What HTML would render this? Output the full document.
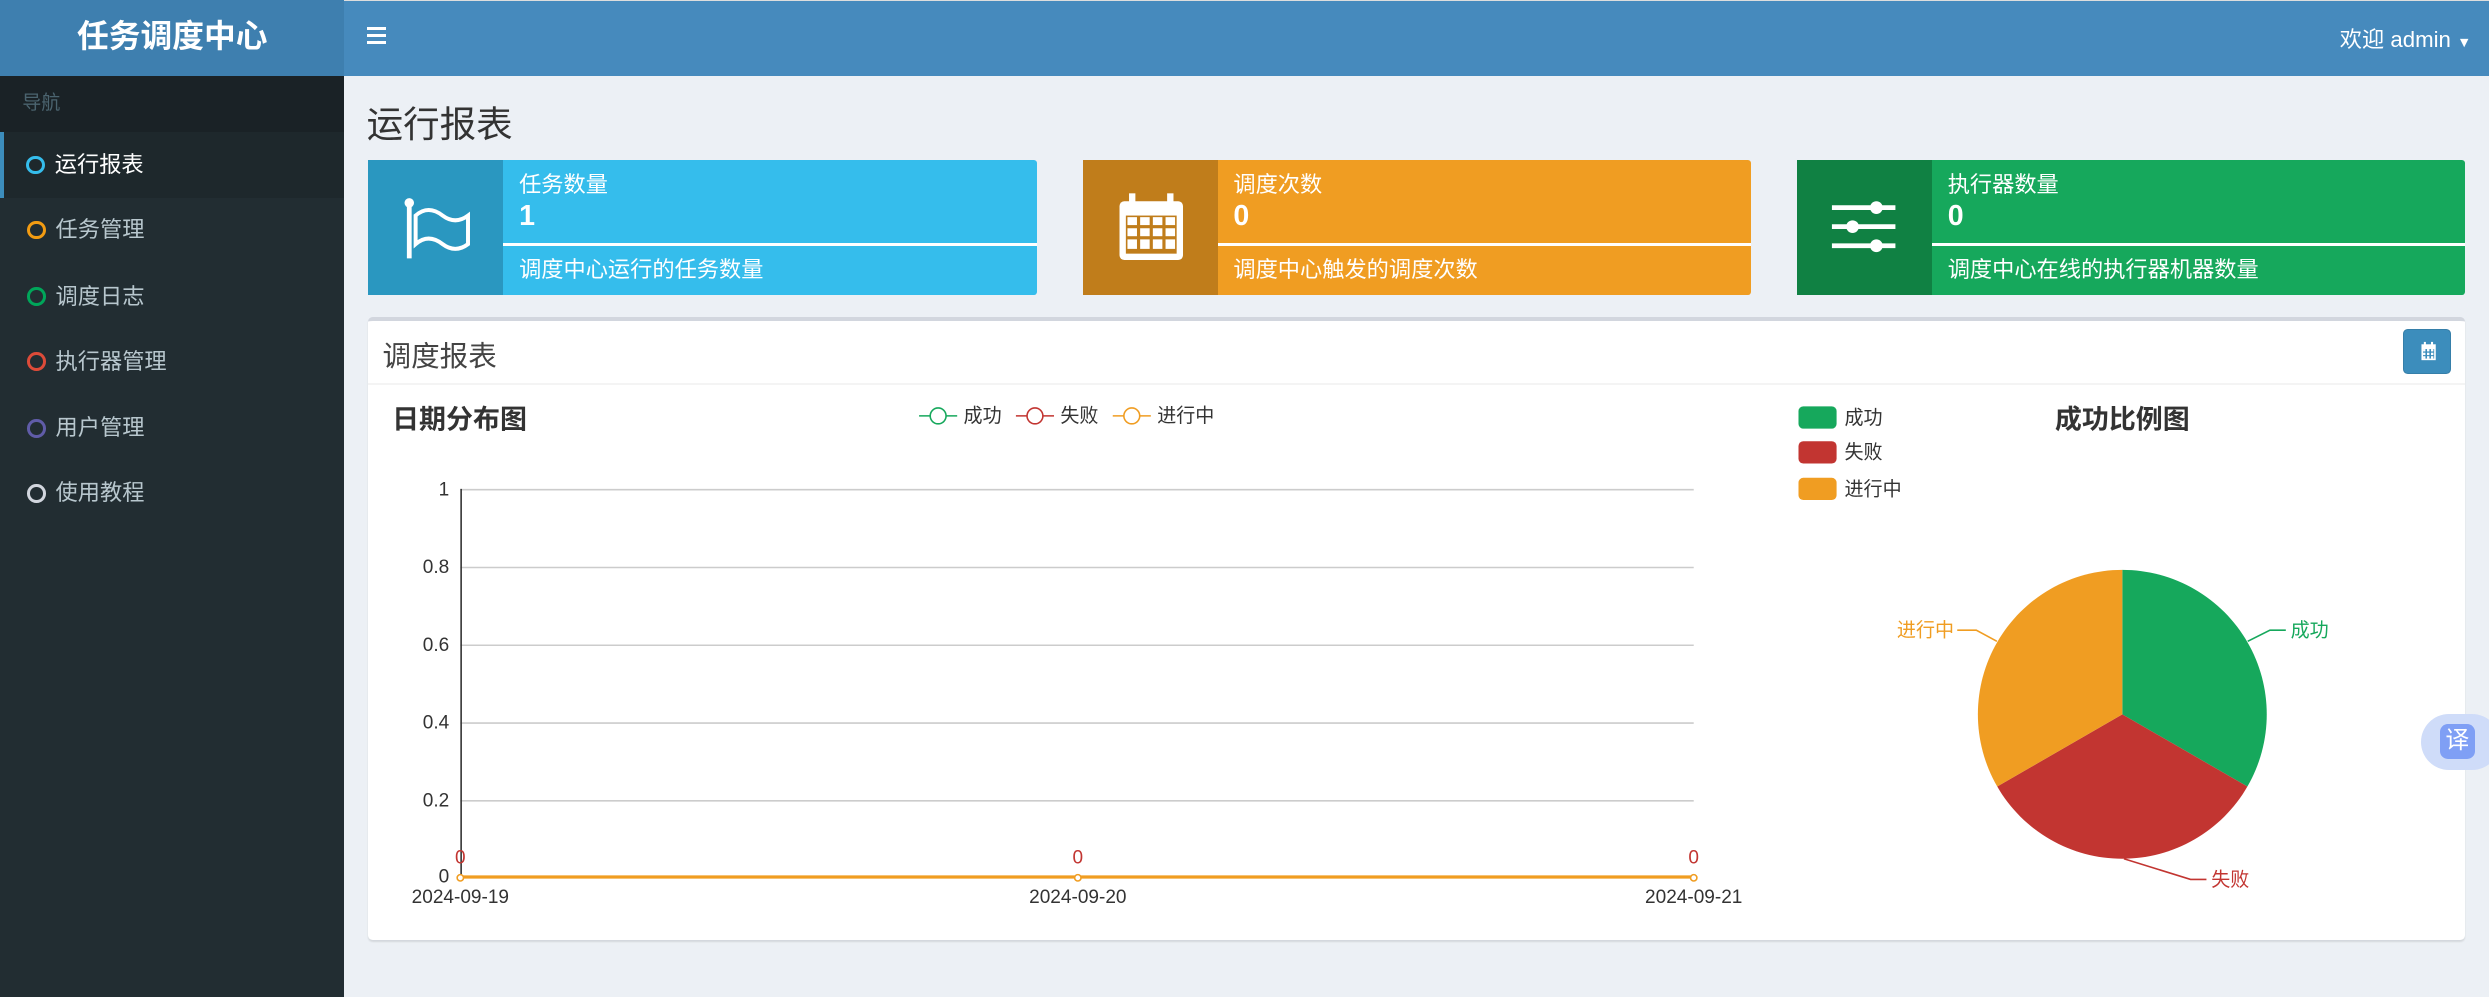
<!DOCTYPE html>
<html><head><meta charset="utf-8"><style>
html,body{margin:0;padding:0;overflow:hidden;}
body{width:2489px;height:997px;background:#ecf0f5;}
#w{zoom:1.58737;width:1568px;height:628px;position:relative;font-family:"Liberation Sans","Noto Sans CJK SC",sans-serif;color:#333;}
.abs{position:absolute;}
#top{left:0;top:0;width:1568px;height:48px;background:#468abd;border-top:1px solid #ddd;box-sizing:border-box;}
#logo{left:0;top:0;width:217px;height:48px;background:#3e7faf;color:#fff;font-size:20px;font-weight:bold;text-align:center;line-height:46px;}
#side{left:0;top:48px;width:217px;height:580px;background:#222d32;}
.nav{left:0;width:217px;height:42px;color:#b8c7ce;font-size:14px;line-height:42px;}
.nav i{position:absolute;left:17px;top:15px;width:8px;height:8px;border:2px solid;border-radius:50%;}
.nav span{position:absolute;left:35px;}
.ib{height:85px;width:421px;border-radius:2px;color:#fff;}
.ib .ic{position:absolute;left:0;top:0;width:85px;height:85px;}
.ib .t{position:absolute;left:95px;top:4px;font-size:14px;}
.ib .n{position:absolute;left:95px;top:25px;font-size:18px;font-weight:bold;}
.ib .ln{position:absolute;left:85px;right:0;top:52px;height:2px;background:#fff;}
.ib .d{position:absolute;left:95px;top:58px;font-size:14px;}
</style></head><body><div id="w">
<div id="top" class="abs"></div>
<div id="logo" class="abs">任务调度中心</div>
<div class="abs" style="left:231px;top:17px;width:12px;">
<div style="height:2px;background:#fff;margin-bottom:2.5px"></div><div style="height:2px;background:#fff;margin-bottom:2.5px"></div><div style="height:2px;background:#fff"></div></div>
<div class="abs" style="left:1474px;top:14px;color:#fff;font-size:14px;">欢迎 admin <span style="font-size:9px">▼</span></div>
<div id="side" class="abs"></div>
<div class="abs" style="left:0;top:48px;width:217px;height:35px;background:#1a2226;color:#4b646f;font-size:12px;line-height:35px;text-indent:14px;">导航</div>
<div class="abs nav" style="top:83px;background:#1e282c;color:#fff;border-left:3px solid #3c8dbc;box-sizing:border-box;"><i style="color:#35bdec;left:14px"></i><span style="left:32px">运行报表</span></div>
<div class="abs nav" style="top:124px"><i style="color:#f39c12"></i><span>任务管理</span></div>
<div class="abs nav" style="top:166px"><i style="color:#00a65a"></i><span>调度日志</span></div>
<div class="abs nav" style="top:207px"><i style="color:#dd4b39"></i><span>执行器管理</span></div>
<div class="abs nav" style="top:249px"><i style="color:#605ca8"></i><span>用户管理</span></div>
<div class="abs nav" style="top:290px"><i style="color:#d2d6de"></i><span>使用教程</span></div>

<div class="abs" style="left:231px;top:60px;font-size:23px;color:#333;">运行报表</div>

<div class="abs ib" style="left:232px;top:101px;background:#35bdec;">
<div class="ic" style="background:#2a97c0;"><svg width="85" height="85"><g fill="none" stroke="#fff" stroke-width="3"><line x1="26" y1="28" x2="26" y2="62"/><path d="M30 35 Q38 28 47 35 Q55 41 63 35 V53 Q55 59 47 53 Q38 46 30 53 Z" stroke-width="2.5"/></g><circle cx="26" cy="27" r="3" fill="#fff"/></svg></div>
<div class="t">任务数量</div><div class="n">1</div><div class="ln"></div><div class="d">调度中心运行的任务数量</div></div>

<div class="abs ib" style="left:682px;top:101px;background:#f09d22;">
<div class="ic" style="background:#c07d1b;"><svg width="85" height="85"><rect x="23" y="26" width="40" height="37" rx="3" fill="#fff"/><rect x="29" y="21" width="4" height="9" fill="#fff"/><rect x="53" y="21" width="4" height="9" fill="#fff"/><g fill="#c07d1b"><rect x="27" y="35" width="32" height="24"/></g><g fill="#fff"><rect x="28" y="36" width="6" height="5"/><rect x="36" y="36" width="6" height="5"/><rect x="44" y="36" width="6" height="5"/><rect x="52" y="36" width="6" height="5"/><rect x="28" y="43" width="6" height="5"/><rect x="36" y="43" width="6" height="5"/><rect x="44" y="43" width="6" height="5"/><rect x="52" y="43" width="6" height="5"/><rect x="28" y="50" width="6" height="6"/><rect x="36" y="50" width="6" height="6"/><rect x="44" y="50" width="6" height="6"/><rect x="52" y="50" width="6" height="6"/></g></svg></div>
<div class="t">调度次数</div><div class="n">0</div><div class="ln"></div><div class="d">调度中心触发的调度次数</div></div>

<div class="abs ib" style="left:1132px;top:101px;background:#16a85c;">
<div class="ic" style="background:#108143;"><svg width="85" height="85"><g stroke="#fff" stroke-width="3"><line x1="22" y1="30" x2="62" y2="30"/><line x1="22" y1="42" x2="62" y2="42"/><line x1="22" y1="54" x2="62" y2="54"/></g><g fill="#fff"><circle cx="50" cy="30" r="4"/><circle cx="35" cy="42" r="4"/><circle cx="50" cy="54" r="4"/></g></svg></div>
<div class="t">执行器数量</div><div class="n">0</div><div class="ln"></div><div class="d">调度中心在线的执行器机器数量</div></div>

<div class="abs" style="left:232px;top:200px;width:1321px;height:392px;background:#fff;border-top:3px solid #d2d6de;border-radius:3px;box-sizing:border-box;box-shadow:0 1px 1px rgba(0,0,0,.1);">
<div class="abs" style="left:9px;top:8px;font-size:18px;color:#444;">调度报表</div>
<div class="abs" style="left:0;right:0;top:39px;height:1px;background:#f4f4f4;"></div>
<div class="abs" style="left:1282px;top:5px;width:30px;height:28px;background:#3c8dbc;border-radius:3px;border:1px solid #367fa9;box-sizing:border-box;">
<svg width="30" height="28"><rect x="11" y="9" width="9" height="10" fill="#fff"/><g fill="#3c8dbc"><rect x="12" y="12" width="7" height="6"/></g><g fill="#fff"><rect x="12" y="12" width="1.5" height="1.5"/><rect x="14.5" y="12" width="1.5" height="1.5"/><rect x="17" y="12" width="1.5" height="1.5"/><rect x="12" y="14.3" width="1.5" height="1.5"/><rect x="14.5" y="14.3" width="1.5" height="1.5"/><rect x="17" y="14.3" width="1.5" height="1.5"/><rect x="12" y="16.5" width="1.5" height="1.5"/><rect x="14.5" y="16.5" width="1.5" height="1.5"/><rect x="17" y="16.5" width="1.5" height="1.5"/><rect x="12.5" y="7.5" width="1.3" height="3"/><rect x="17" y="7.5" width="1.3" height="3"/></g></svg></div>
</div>

<svg class="abs" style="left:0;top:0" width="1568" height="628" font-family="Liberation Sans,Noto Sans CJK SC,sans-serif">
<text x="247" y="270" font-size="17" font-weight="bold" fill="#333">日期分布图</text>
<g font-size="12" fill="#333">
<line x1="579" y1="262" x2="603" y2="262" stroke="#16a85c"/><circle cx="591" cy="262" r="5" fill="#fff" stroke="#16a85c"/><text x="607" y="266">成功</text>
<line x1="640" y1="262" x2="664" y2="262" stroke="#c23531"/><circle cx="652" cy="262" r="5" fill="#fff" stroke="#c23531"/><text x="668" y="266">失败</text>
<line x1="701" y1="262" x2="725" y2="262" stroke="#f09d22"/><circle cx="713" cy="262" r="5" fill="#fff" stroke="#f09d22"/><text x="729" y="266">进行中</text>
</g>
<g stroke="#ccc" stroke-width="1"><line x1="290" y1="308.5" x2="1067" y2="308.5"/><line x1="290" y1="357.5" x2="1067" y2="357.5"/><line x1="290" y1="406.5" x2="1067" y2="406.5"/><line x1="290" y1="455.5" x2="1067" y2="455.5"/><line x1="290" y1="504.5" x2="1067" y2="504.5"/></g>
<line x1="290.5" y1="308" x2="290.5" y2="553" stroke="#333"/>
<line x1="290" y1="552.5" x2="1067" y2="552.5" stroke="#f09d22" stroke-width="2"/>
<g font-size="12" fill="#333" text-anchor="end"><text x="283" y="312">1</text><text x="283" y="361">0.8</text><text x="283" y="410">0.6</text><text x="283" y="459">0.4</text><text x="283" y="508">0.2</text><text x="283" y="556">0</text></g>
<g font-size="12" fill="#333" text-anchor="middle"><text x="290" y="569">2024-09-19</text><text x="679" y="569">2024-09-20</text><text x="1067" y="569">2024-09-21</text></g>
<g font-size="12" fill="#c23531" text-anchor="middle"><text x="290" y="544">0</text><text x="679" y="544">0</text><text x="1067" y="544">0</text></g>
<g fill="#fff" stroke="#f09d22"><circle cx="290" cy="553" r="2"/><circle cx="679" cy="553" r="2"/><circle cx="1067" cy="553" r="2"/></g>

<g font-size="12" fill="#333">
<rect x="1133" y="256" width="24" height="14" rx="3" fill="#16a85c"/><text x="1162" y="267">成功</text>
<rect x="1133" y="278" width="24" height="14" rx="3" fill="#c23531"/><text x="1162" y="289">失败</text>
<rect x="1133" y="301" width="24" height="14" rx="3" fill="#f09d22"/><text x="1162" y="312">进行中</text>
</g>
<text x="1337" y="270" font-size="17" font-weight="bold" fill="#333" text-anchor="middle">成功比例图</text>
<path d="M1337 450 L1337 359 A91 91 0 0 1 1415.8 495.5 Z" fill="#16a85c"/>
<path d="M1337 450 L1415.8 495.5 A91 91 0 0 1 1258.2 495.5 Z" fill="#c23531"/>
<path d="M1337 450 L1258.2 495.5 A91 91 0 0 1 1337 359 Z" fill="#f09d22"/>
<polyline points="1416,404 1430,397 1440,397" fill="none" stroke="#16a85c"/><text x="1443" y="401" font-size="12" fill="#16a85c">成功</text>
<polyline points="1258,404 1245,397 1233,397" fill="none" stroke="#f09d22"/><text x="1195" y="401" font-size="12" fill="#f09d22">进行中</text>
<polyline points="1338,541 1380,554 1390,554" fill="none" stroke="#c23531"/><text x="1393" y="558" font-size="12" fill="#c23531">失败</text>
</svg>
<div class="abs" style="left:1525px;top:450px;width:50px;height:35px;border-radius:18px;background:#cfdcf9;"></div>
<div class="abs" style="left:1537px;top:456px;width:22px;height:22px;border-radius:5px;background:#7f9ff5;color:#fff;font-size:15px;line-height:22px;text-align:center;">译</div>
</div></body></html>
